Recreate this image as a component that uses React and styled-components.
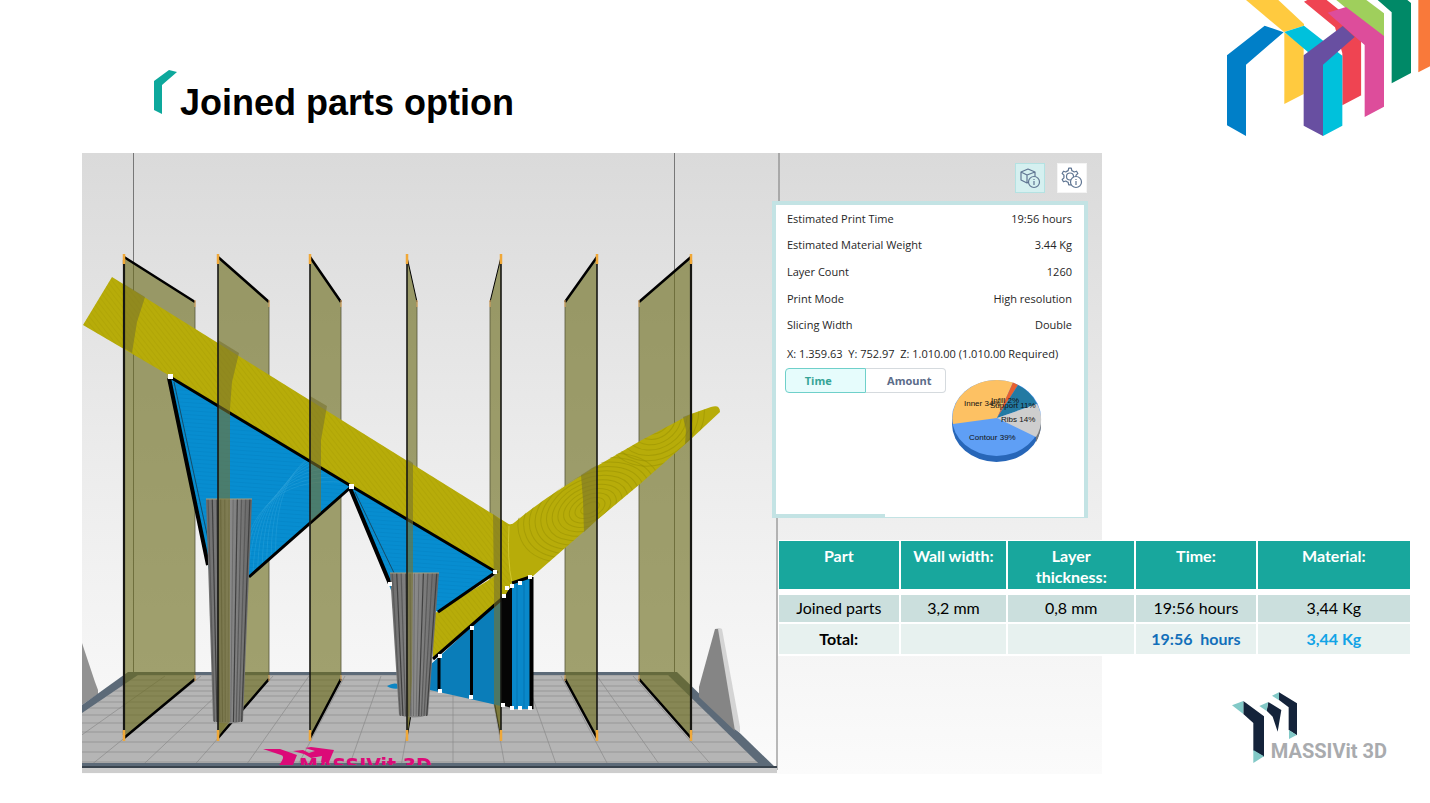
import React from "react";
import styled, { createGlobalStyle, css } from "styled-components";

const GlobalStyle = createGlobalStyle`
  *, *::before, *::after { box-sizing: border-box; }
  body { margin: 0; background: #fff; font-family: "Open Sans", "Noto Sans", sans-serif; color: #000; }
`;

const Slide = styled.main`
  position: relative;
  min-height: 100vh;
  padding: 70px 18px 28px 82px;
  overflow: hidden;
`;

const CornerArt = styled.svg`
  position: absolute;
  top: 0;
  right: 0;
  width: 230px;
  height: 150px;
`;

const Header = styled.header`
  display: flex;
  align-items: flex-start;
  gap: 3px;
  height: 83px;
  padding-left: 72px;
`;

const Mark = styled.svg`
  width: 23px;
  height: 44px;
`;

const Title = styled.h1`
  margin: 13px 0 0;
  font: bold 36px/40px "Liberation Sans", Arial, sans-serif;
`;

const Stage = styled.div`
  display: grid;
  grid-template-columns: 690fr 330fr 310fr;
  align-items: start;
`;

const Scene = styled.svg`
  grid-area: 1 / 1 / 2 / 3;
  display: block;
  width: 100%;
  height: auto;
`;

const Side = styled.section`
  grid-area: 1 / 2 / 2 / 4;
  z-index: 1;
  display: flex;
  flex-direction: column;
`;

const Tools = styled.div`
  display: flex;
  justify-content: flex-end;
  gap: 12px;
  width: 315px;
  padding: 10px 0 8px;
`;

const ToolButton = styled.button`
  --face: ${(p) => (p.$active ? "#d5f0f0" : "#fff")};
  display: grid;
  place-items: center;
  width: 30px;
  height: 30px;
  padding: 0;
  border: 1px solid ${(p) => (p.$active ? "#b4e2e2" : "#f4f4f4")};
  background: var(--face);
  svg { width: 22px; height: 22px; fill: none; stroke: #5f7592; stroke-width: 1.2; stroke-linejoin: round; }
  circle { fill: var(--face); }
`;

const Panel = styled.section`
  position: relative;
  width: 316px;
  height: 317px;
  padding: 0 12px 0 11px;
  border: 4px solid #c3e3e4;
  border-bottom-width: 1px;
  background: #fff;
  font-size: 11px;
  color: #262626;
  &::after {
    content: "";
    position: absolute;
    left: 0;
    bottom: 0;
    width: 109px;
    height: 3px;
    background: #c3e3e4;
  }
`;

const Facts = styled.dl`
  display: grid;
  grid-auto-rows: 1fr;
  height: 133px;
  margin: 0;
`;

const Fact = styled.div`
  display: flex;
  justify-content: space-between;
  align-items: center;
  dd { margin: 0; }
`;

const Extents = styled.p`
  margin: 7px 0 6px;
  line-height: 17px;
  white-space: pre;
`;

const Breakdown = styled.div`
  display: flex;
  align-items: flex-start;
  gap: 4px;
  margin-left: -2px;
`;

const Tabs = styled.div`
  display: flex;
  width: 161px;
  height: 25px;
`;

const Tab = styled.button`
  width: 81px;
  padding: 0 14px 0 0;
  font: bold 11px/20px "Open Sans", sans-serif;
  ${(p) =>
    p.$active
      ? css`
          border: 1px solid #6fd0ca;
          border-radius: 4px 0 0 4px;
          background: #e6fcfc;
          color: #35a496;
        `
      : css`
          padding: 0 0 0 8px;
          border: 1px solid #d5dade;
          border-left: 0;
          border-radius: 0 4px 4px 0;
          background: #fff;
          color: #5b6c89;
        `}
`;

const Pie = styled.svg`
  flex: none;
  width: 92px;
  height: 86px;
  margin-top: 10px;
  text { font: 8px "Liberation Sans", Arial, sans-serif; fill: #111; }
`;

const Summary = styled.table`
  width: calc(100% - 6px);
  margin: 22px 0 0 6px;
  table-layout: fixed;
  border-collapse: separate;
  border-spacing: 1px;
  background: #fff;
  font: 16px/21px Lato, Carlito, sans-serif;
  text-align: center;
  th, td { border: solid #fff; border-width: 0 1px 1px 0; white-space: nowrap; }
`;

const HeadCell = styled.th`
  width: ${(p) => p.$width};
  && {
    padding: 4px ${(p) => (p.$wrap ? 16 : 0)}px 2px;
    border-bottom-width: 5px;
    white-space: ${(p) => (p.$wrap ? "normal" : "nowrap")};
  }
  background: #18a79d;
  background-clip: padding-box;
  color: #fff;
  vertical-align: top;
`;

const BodyRow = styled.tr`
  height: ${(p) => (p.$total ? 31 : 28)}px;
  background: ${(p) => (p.$total ? "#e7f1ef" : "#cbdfdd")};
  font-weight: ${(p) => (p.$total ? "bold" : "normal")};
  td { padding: ${(p) => (p.$total ? "2px 0 4px" : "1px 0 4px")}; }
`;

const Cell = styled.td`
  color: ${(p) => p.$color || "#000"};
`;

const Brand = styled.div`
  display: flex;
  align-items: flex-end;
  align-self: flex-end;
  margin: 36px 25px 0 0;
  height: 73px;
`;

const BrandMark = styled.svg`
  width: 66px;
  height: 72px;
  margin-right: -27px;
  margin-bottom: 1px;
`;

const BrandName = styled.span`
  font: bold 20px/28px Roboto, "Liberation Sans", sans-serif;
  color: #a9abae;
`;

/* Print planes: near edge x, far edge x, and far edge of the strip in front of the model */
const planes = [
  [124, 195, "124,284 145,297 137,322 132,353 124,348"],
  [218, 269, "218,340 239,353 232,382 230,408 230,722 226,725 218,738"],
  [310, 341, "310,396 327,406 321,440 321,512 310,522"],
  [407, 417, "407,459 413,463 413,573 412,680 409,725 407,738"],
  [501, 490, "501,520 493,514 494,590 494,705 501,738"],
  [597, 565, "597,465 581,475 583,500 584,532 597,520"],
  [691, 639, "691,414 683,417 686,430 685,444 691,439"],
];

const floorRows = [675, 680, 686, 691, 696, 702, 708, 715, 723, 732, 742, 752, 762];
const floorCols = Array.from({ length: 17 }, (_, i) => i - 9);
const handles = [
  [170, 376], [351, 486], [495, 572], [390, 584], [472, 628], [440, 656], [440, 691], [471, 697],
  [504, 596], [507, 588], [512, 586], [520, 583], [530, 577], [512, 708], [520, 708], [530, 708], [503, 705],
];

function Column({ x1, x2, top, b1, b2, bottom, fill }) {
  const n = 11;
  return (
    <g>
      <path d={`M${x1} ${top}H${x2}L${b2} ${bottom}Q${(b1 + b2) / 2} ${bottom + 5} ${b1} ${bottom}Z`} fill={fill} />
      {Array.from({ length: n }, (_, i) => {
        const t = (i + 0.5) / n;
        return (
          <line key={i} x1={x1 + (x2 - x1) * t} y1={top} x2={b1 + (b2 - b1) * t} y2={bottom + 1}
            stroke={i % 3 === 1 ? "#404040" : "#5a5a5a"} strokeWidth={i > 3 && i < 7 ? 0.6 : 1.2} />
        );
      })}
      <line x1={x1} y1={top} x2={x2} y2={top} stroke="#a99f7e" />
    </g>
  );
}

function PrintScene() {
  return (
    <Scene viewBox="82 153 1020 621" role="img" aria-label="Model with joined parts on the print bed">
      <defs>
        <linearGradient id="sky" x1="0" y1="0" x2="0" y2="1">
          <stop offset="0" stopColor="#dadada" />
          <stop offset="0.5" stopColor="#ececec" />
          <stop offset="1" stopColor="#fbfbfb" />
        </linearGradient>
        <linearGradient id="metal">
          <stop offset="0" stopColor="#6c6c6c" />
          <stop offset="0.5" stopColor="#8b8b8b" />
          <stop offset="1" stopColor="#666" />
        </linearGradient>
        <pattern id="ribs" width="4" height="4" patternUnits="userSpaceOnUse" patternTransform="rotate(52)">
          <path d="M0 0H4" stroke="#938a00" strokeOpacity="0.4" />
        </pattern>
        <pattern id="layers" width="4" height="4" patternUnits="userSpaceOnUse" patternTransform="rotate(4)">
          <path d="M0 0H4" stroke="#0077b5" strokeOpacity="0.5" />
        </pattern>
        <clipPath id="bed"><path d="M138 675H668L758 763H82V713Z" /></clipPath>
        <clipPath id="decal"><path d="M255 740H445V765H255Z" /></clipPath>
        <clipPath id="wing"><path d="M510 524L565 485L597 465L640 441L691 414L712 407L719 407L720 412L691 439L640 484L597 520L533 576L512 582Z" /></clipPath>
        <clipPath id="tri"><path d="M170 377L351 487L240 585H212Z" /></clipPath>
      </defs>

      <rect x="82" y="153" width="1020" height="621" fill="url(#sky)" />
      <path d="M133.500 153V672M674.500 153V674M779 153V205M777 516V770" stroke="#777" fill="none" />

      <path d="M82 643L95 682L98 690V694L82 705Z" fill="#929292" />
      <path d="M128 672H677L777 769H82V705Z" fill="#5c6a78" />
      <path d="M82 768H777V773H82Z" fill="#cdcdcd" />
      <path d="M138 675H668L758 763H82V713Z" fill="#b5b5b5" />
      <g clipPath="url(#bed)" stroke="#8a8a8a" strokeWidth="0.7">
        {floorRows.map((y) => <line key={y} x1="82" x2="777" y1={y} y2={y} />)}
        {floorCols.map((k) => <line key={k} x1={453 + k * 36} y1="676" x2={453 + k * 51.7} y2="765" />)}
      </g>
      <path d="M715 629Q719 627 722 629L740 727V733L733 728Z" fill="#d4d4d4" />
      <path d="M715 629L718 629L735 731L699 697V687Z" fill="#858585" />

      {planes.map(([near, far]) => (
        <g key={near}>
          <path d={`M${near} 257L${far} 302V679L${near} 738Z`} fill="#6b6b1a" fillOpacity="0.62" />
          <path d={`M${far} 302V679`} stroke="#55553a" strokeWidth="0.8" />
          <path d={`M${near} 257L${far} 302M${near} 738L${far} 679`} stroke="#000" strokeWidth={Math.abs(near - far) > 15 ? 2.5 : 1} />
          <path d={`M${far} 300V307M${far} 675V681`} stroke="#f0b56a" />
        </g>
      ))}

      {/* lower ribs under the joint */}
      <path d="M387 686Q397 680 402 688Q392 690 387 686Z" fill="#0e86c4" />
      <path d="M430 665L505 596V707L488 703L430 690Z" fill="#0a7db9" />
      <path d="M439 658V690M471.500 629V696" stroke="#000" strokeWidth="3" />
      <path d="M501 598L512 586V708L501 705Z" fill="#050505" />
      <path d="M512 584L530 578V709H512Z" fill="#0988ca" />
      <path d="M517 584V708M524 582V708" stroke="#0474b2" strokeWidth="1" />
      <path d="M531.500 577V709" stroke="#000" strokeWidth="4" />

      {/* yellow body */}
      <path d="M112 277L507 523Q511 526 515 522Q538 503 565 486L597 466L640 441L691 414L711 407Q720 404 720 412L691 439L640 484L597 520L533 576L512 583L505 596L433 659L432 615L497 575L351 487L170 376L83 325Z" fill="#b7ac09" />
      <path d="M112 277L507 523L512 583L505 596L433 659L432 615L497 575L351 487L170 376L83 325Z" fill="url(#ribs)" />
      <g clipPath="url(#wing)" fill="none" stroke="#938b00" strokeOpacity="0.45">
        {Array.from({ length: 12 }, (_, i) => <ellipse key={i} cx="590" cy="508" rx={10 + i * 6} ry={5 + i * 4} transform="rotate(-25 590 508)" />)}
        {Array.from({ length: 8 }, (_, i) => <ellipse key={i} cx="655" cy="420" rx={10 + i * 6} ry={8 + i * 5} transform="rotate(-35 655 420)" />)}
      </g>
      <path d="M509 526Q507 560 512 583" fill="none" stroke="#d2c82e" />

      {/* blue webs */}
      <path d="M170 377L351 487L240 585H212Z" fill="#078dd0" />
      <path d="M170 377L351 487L240 585H212Z" fill="url(#layers)" />
      <g clipPath="url(#tri)" fill="none" stroke="#33a5db" strokeOpacity="0.4">
        {Array.from({ length: 9 }, (_, i) => <path key={i} d={`M${238 + i * 5} 590C${242 + i * 3} ${520 - i * 5} ${270 + i * 4} ${478 - i * 3} 340 ${482 - i * 5}`} />)}
      </g>
      <path d="M351 487L496 572L438 612L391 590Z" fill="#078dd0" />
      <path d="M351 487L496 572L438 612L391 590Z" fill="url(#layers)" />
      <path d="M174 382L210 548M355 492L396 577" stroke="#164c68" strokeWidth="1" />
      <path d="M170 377L351 486L496 572L438 612M351 487L249 577M433 659L505 596M512 583L530 577" fill="none" stroke="#000" strokeWidth="3" />
      <path d="M169 378L208 565M350 488L390 584" stroke="#000" strokeWidth="4" />

      <Column x1={206} x2={252} top={499} b1={213} b2={243} bottom={721} fill="url(#metal)" />
      <Column x1={390} x2={439} top={573} b1={399} b2={428} bottom={715} fill="url(#metal)" />

      {planes.map(([near, , strip]) => (
        <g key={near}>
          <polygon points={strip} fill="#78732d" fillOpacity="0.6" />
          <path d={`M${near} 260V735`} stroke="#171713" strokeWidth={near === 124 || near === 691 ? 2.2 : 1.6} />
          <path d={`M${near} 254V264M${near} 730V741`} stroke="#f0a838" strokeWidth="2.5" />
        </g>
      ))}
      {handles.map(([x, y]) => <rect key={`${x}-${y}`} x={x - 2} y={y - 2} width={y === 376 || y === 486 ? 5 : 4} height={y === 376 || y === 486 ? 5 : 4} fill="#fff" />)}

      <g fill="#dc0a78" clipPath="url(#decal)">
        <path d="M263 749L280 749L297 755L293 765H279Q286 756 281 755Z" />
        <path d="M293 751L303 750L309 753L315 751L305 748L311 747L334 750L329 762H321L322 756L311 758L304 754Z" />
        <text x="299" y="772" fontFamily="DejaVu Sans" fontWeight="bold" fontSize="19">MASSIVit 3D</text>
      </g>
      <path d="M82 767H777" stroke="#39434d" strokeWidth="2" />
    </Scene>
  );
}

function InfoBadge() {
  return (
    <>
      <circle cx="15" cy="15" r="5.500" />
      <path d="M15 14V18M15 12V13" />
    </>
  );
}

function CubeInfo() {
  return (
    <svg viewBox="0 0 22 22" aria-hidden="true">
      <path d="M9 2L16 5V12L8 16L2 13V5ZM2 5L8 8L16 5M8 8V16" />
      <InfoBadge />
    </svg>
  );
}

function GearInfo() {
  const tooth = "M5.900 4.200L7.200 3.600L7.700 1.200H10.300L10.800 3.600L12.100 4.200";
  return (
    <svg viewBox="0 0 22 22" aria-hidden="true">
      {[0, 60, 120, 180, 240, 300].map((a) => (
        <path key={a} d={`${tooth}L12.300 3.900`} transform={`rotate(${a} 9 9.500)`} />
      ))}
      <circle cx="9" cy="9.500" r="3.500" />
      <InfoBadge />
    </svg>
  );
}

const facts = [
  ["Estimated Print Time", "19:56 hours"],
  ["Estimated Material Weight", "3.44 Kg"],
  ["Layer Count", "1260"],
  ["Print Mode", "High resolution"],
  ["Slicing Width", "Double"],
];

const columns = [
  ["Part", "19.2%"],
  ["Wall width:", "17%"],
  ["Layer thickness:", "20.2%"],
  ["Time:", "19.2%"],
  ["Material:", "24.4%"],
];

export default function App() {
  return (
    <>
      <GlobalStyle />
      <Slide>
        <CornerArt viewBox="0 0 690 450" aria-hidden="true">
          <path d="M138 0H235L312 72V77L252 96Z" fill="#ffca3f" />
          <path d="M253 97L311 140V282L253 312Z" fill="#ffca3f" />
          <path d="M312 5L322 0H380L455 60L484 120V286L427 316V160L405 82Z" fill="#ef4452" />
          <path d="M409 0H499L552 40V112L435 22Z" fill="#9fcf5c" />
          <path d="M533 0H622L633 9V219L575 250V37Z" fill="#008967" />
          <path d="M655 0H690V199L655 217Z" fill="#f9793a" />
          <path d="M253 96L312 77L427 167V377L369 408V194Z" fill="#00c1dc" />
          <path d="M484 125L494 135V290L484 286Z" fill="#fff" />
          <path d="M383 38L438 21L552 108V320L494 351V135Z" fill="#dd4d9b" />
          <path d="M428 78L464 111L369 194V408L311 377V166Z" fill="#684fa1" />
          <path d="M194 77L251 97L138 194V408L81 376V166Z" fill="#007fc8" />
        </CornerArt>

        <Header>
          <Mark viewBox="0 0 23 44" aria-hidden="true">
            <path d="M0 11L15 0L23 2L8 15V44L0 40Z" fill="#0da89c" />
          </Mark>
          <Title>Joined parts option</Title>
        </Header>

        <Stage>
          <PrintScene />
          <Side>
            <Tools>
              <ToolButton type="button" $active aria-label="Model information"><CubeInfo /></ToolButton>
              <ToolButton type="button" aria-label="Settings information"><GearInfo /></ToolButton>
            </Tools>

            <Panel>
              <Facts>
                {facts.map(([name, value]) => (
                  <Fact key={name}><dt>{name}</dt><dd>{value}</dd></Fact>
                ))}
              </Facts>
              <Extents>{"X: 1.359.63  Y: 752.97  Z: 1.010.00 (1.010.00 Required)"}</Extents>
              <Breakdown>
                <Tabs>
                  <Tab type="button" $active>Time</Tab>
                  <Tab type="button">Amount</Tab>
                </Tabs>
                <Pie viewBox="950 379 92 86" role="img" aria-label="Print time by part of the model">
                  <path d="M952 420V425A44.500 38 0 0 0 1041 425V420Z" fill="#2766b8" />
                  <path d="M1036 438V443Q1041 434 1041 425V419Z" fill="#777" />
                  <ellipse cx="996.500" cy="419" rx="44.500" ry="38" fill="#5f9ff5" />
                  <path d="M997 419L953 425A44.500 38 0 0 1 1013 383.500Z" fill="#fdc163" />
                  <path d="M997 419L1013 383.500L1018 386Z" fill="#e7602f" />
                  <path d="M997 419L1018 386A44.500 38 0 0 1 1037 405Z" fill="#237aa3" />
                  <path d="M997 419L1037 405A44.500 38 0 0 1 1036 438Z" fill="#cecece" />
                  <text x="964" y="407">Inner 34%</text>
                  <text x="991" y="404">Infill 2%</text>
                  <text x="990" y="409">Support 11%</text>
                  <text x="1001" y="423">Ribs 14%</text>
                  <text x="969" y="441">Contour 39%</text>
                </Pie>
              </Breakdown>
            </Panel>

            <Summary>
              <thead>
                <tr>
                  {columns.map(([name, width]) => (
                    <HeadCell key={name} scope="col" $width={width} $wrap={name.startsWith("Layer")}>{name}</HeadCell>
                  ))}
                </tr>
              </thead>
              <tbody>
                <BodyRow>
                  <Cell>Joined parts</Cell><Cell>3,2 mm</Cell><Cell>0,8 mm</Cell><Cell>19:56 hours</Cell><Cell>3,44 Kg</Cell>
                </BodyRow>
                <BodyRow $total>
                  <Cell>Total:</Cell><Cell /><Cell />
                  <Cell $color="#126fba">{"19:56 \u00a0hours"}</Cell>
                  <Cell $color="#11a3e6">3,44 Kg</Cell>
                </BodyRow>
              </tbody>
            </Summary>

            <Brand>
              <BrandMark viewBox="68 38 198 216" aria-hidden="true">
                <path d="M102 65L164 111V232L132 214V131L102 104Z" fill="#14233a" />
                <path d="M68 78L102 65V104Z" fill="#82c9c7" />
                <path d="M132 212L164 231L132 251Z" fill="#82c9c7" />
                <path d="M177 68L216 92L205 157L190 112L172 94Z" fill="#14233a" />
                <path d="M150 80L177 68L172 95Z" fill="#82c9c7" />
                <path d="M209 39L263 72V168L238 152V84L209 62Z" fill="#14233a" />
                <path d="M188 49L209 39V63Z" fill="#82c9c7" />
                <path d="M239 152L262 167L239 179Z" fill="#82c9c7" />
              </BrandMark>
              <BrandName>MASSIVit 3D</BrandName>
            </Brand>
          </Side>
        </Stage>
      </Slide>
    </>
  );
}
